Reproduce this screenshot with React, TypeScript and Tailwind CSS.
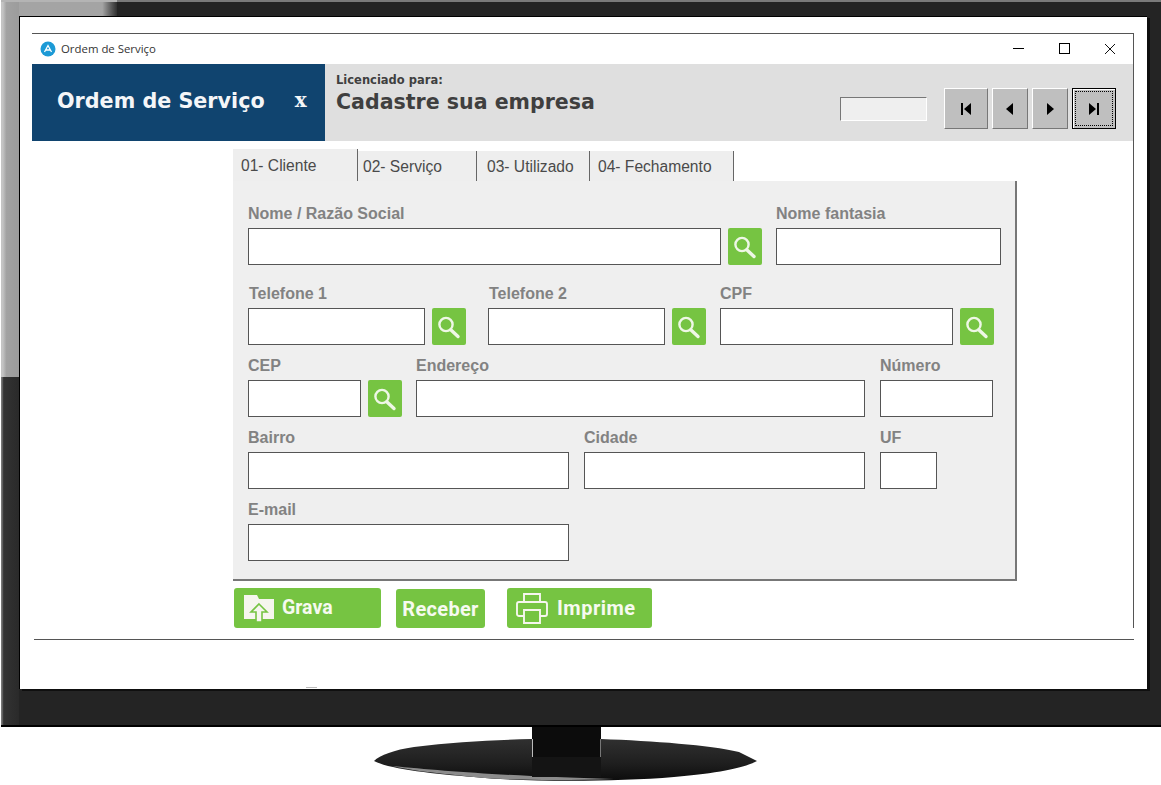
import React from "react";

const Label: React.FC<{ text: string }> = ({ text }) => (
    <div className="h-[22px] text-[16px] leading-[16px] font-bold text-[#828282] whitespace-nowrap">{text}</div>
);

const Input: React.FC<{ className: string }> = ({ className }) => (
    <div className={`h-[37px] bg-white border border-[#555] ${className}`} />
);

const SearchButton: React.FC = () => (
    <button className="ml-[7px] mt-[22px] w-[34px] h-[37px] shrink-0 bg-[#76c442] rounded-[2px] flex items-center justify-center">
        <svg width="24" height="24" viewBox="0 0 24 24" fill="none" stroke="#eef7e6">
            <circle cx="9" cy="9.5" r="6.6" strokeWidth="2.4" />
            <path d="M14 15 L21 21.5" strokeWidth="3.4" strokeLinecap="round" />
        </svg>
    </button>
);

const NavButton: React.FC<{ className: string; focused?: boolean; children: React.ReactNode }> = ({ className, focused, children }) => (
    <button
        className={`h-[41px] bg-[#bfbfbf] flex items-center justify-center ${className} ${
            focused
                ? "border border-black shadow-[inset_1px_1px_0_#ffffff] outline-1 outline-dotted outline-black -outline-offset-4"
                : "border-t border-l border-white border-b border-r border-b-[#777] border-r-[#777]"
        }`}
    >
        {children}
    </button>
);

const Tab: React.FC<{ label: string; className: string }> = ({ label, className }) => (
    <div className={`bg-[#eeeeee] border-r border-[#666] text-[15.6px] leading-[24px] text-[#4a4a4a] whitespace-nowrap ${className}`}>
        {label}
    </div>
);

const GreenButton: React.FC<{ className: string; children: React.ReactNode }> = ({ className, children }) => (
    <button className={`bg-[#76c442] rounded-[3px] flex items-center text-[#f6faf0] font-bold font-['Roboto',sans-serif] ${className}`}>
        {children}
    </button>
);

export default function App() {
    return (
        <div className="w-[1161px] h-[785px] bg-white overflow-hidden font-['Liberation_Sans',Arial,sans-serif]">
            {/* Monitor */}
            <div className="relative ml-px w-[1160px] h-[727px] pt-[16px] pl-[18px] bg-[#242424] border-b-2 border-black">
                <div className="absolute left-0 top-0 w-[18px] h-[377px] bg-gradient-to-r from-[#c4c4c4] from-10% via-[#a2a2a2] via-30% to-[#9c9c9c]" />
                <div className="absolute left-0 top-[377px] w-[18px] h-[348px] bg-gradient-to-r from-[#777777] from-5% via-[#333333] via-15% to-[#2a2a2a]" />
                <div className="absolute left-[18px] top-0 w-[98px] h-[16px] bg-gradient-to-r from-[#a4a4a4] from-85% to-[#303030]" />
                <div className="absolute left-0 top-0 w-[116px] h-[2px] bg-[#b4b4b4]" />
                <div className="absolute left-[116px] top-0 right-0 h-[2px] bg-[#7a7a7a]" />
                <div className="relative w-[1128px] h-[673px] pt-[16px] pl-[12px] bg-white border-t border-l border-black shadow-[3px_2px_0_#0f0f0f]">
                    {/* Window */}
                    <div className="w-[1102px] h-[595px] border-t border-r border-[#555] flex flex-col">
                        {/* Title bar */}
                        <div className="h-[30px] shrink-0 flex items-center pl-[8px] pr-[17px] pb-[1px]">
                            <svg width="16" height="16" viewBox="0 0 16 16">
                                <circle cx="8" cy="8" r="7.5" fill="#1c9ad6" />
                                <path d="M4.5 11 L8 4.5 L11.5 11 M5.5 9 H10.5" fill="none" stroke="#ffffff" strokeWidth="1.3" />
                            </svg>
                            <span className="ml-[5px] text-[11.4px] text-[#333] font-['Open_Sans',sans-serif]">Ordem de Serviço</span>
                            <div className="ml-auto flex items-center">
                                <span className="block w-[11px] h-px bg-black" />
                                <span className="block ml-[35px] w-[11px] h-[11px] border border-black" />
                                <svg className="ml-[34px]" width="12" height="12" viewBox="0 0 12 12" stroke="#111" fill="none">
                                    <path d="M1 1 L11 11 M11 1 L1 11" />
                                </svg>
                            </div>
                        </div>

                        {/* Header */}
                        <div className="h-[77px] shrink-0 flex bg-[#dfdfdf] font-['DejaVu_Sans',sans-serif]">
                            <div className="w-[293px] bg-[#10446f] text-[#f4f6f8] font-bold flex items-center pl-[25px] pb-[1px]">
                                <span className="text-[20.7px] whitespace-nowrap">Ordem de Serviço</span>
                                <span className="ml-[30px] pb-[4px] text-[20px] font-['DejaVu_Serif',serif]">x</span>
                            </div>
                            <div className="pl-[11px] pt-[8px] text-[#3f3f3f] font-bold">
                                <div className="text-[11.5px] leading-[16px]">Licenciado para:</div>
                                <div className="text-[20.55px] leading-[28px] whitespace-nowrap">Cadastre sua empresa</div>
                            </div>
                            <div className="ml-auto flex items-start pr-[17px] pt-[24px]">
                                <div className="w-[87px] h-[24px] mt-[9px] mr-[17px] bg-[#efefef] border-t border-l border-[#777] border-b border-r border-b-white border-r-white" />
                                <NavButton className="w-[44px] mr-[4px]">
                                    <svg width="12" height="12" viewBox="0 0 12 12" fill="#000"><path d="M1 0h2v12H1z M11 0v12L4 6z" /></svg>
                                </NavButton>
                                <NavButton className="w-[36px] mr-[4px]">
                                    <svg width="8" height="12" viewBox="0 0 8 12" fill="#000"><path d="M7 0v12L0 6z" /></svg>
                                </NavButton>
                                <NavButton className="w-[36px] mr-[4px]">
                                    <svg width="8" height="12" viewBox="0 0 8 12" fill="#000"><path d="M1 0v12l7-6z" /></svg>
                                </NavButton>
                                <NavButton className="w-[44px]" focused>
                                    <svg width="12" height="12" viewBox="0 0 12 12" fill="#000"><path d="M9 0h2v12H9z M1 0v12l7-6z" /></svg>
                                </NavButton>
                            </div>
                        </div>

                        {/* Tabs + form */}
                        <div className="ml-[201px] mt-[8px] w-[784px]">
                            <div className="h-[32px] flex items-end">
                                <Tab label="01- Cliente" className="w-[125px] h-[32px] pl-[8px] pt-[5px]" />
                                <Tab label="02- Serviço" className="w-[119px] h-[30px] pl-[5px] pt-[4px]" />
                                <Tab label="03- Utilizado" className="w-[113px] h-[30px] pl-[10px] pt-[4px]" />
                                <Tab label="04- Fechamento" className="w-[144px] h-[30px] pl-[8px] pt-[4px]" />
                            </div>
                            <div className="h-[400px] bg-[#efefef] border-r-2 border-b-2 border-[#777] pl-[15px] pt-[25px]">
                                <div className="flex">
                                    <div><Label text="Nome / Razão Social" /><Input className="w-[473px]" /></div>
                                    <SearchButton />
                                    <div className="ml-[14px]"><Label text="Nome fantasia" /><Input className="w-[225px]" /></div>
                                </div>
                                <div className="flex mt-[21px]">
                                    <div><div className="pl-px"><Label text="Telefone 1" /></div><Input className="w-[177px]" /></div>
                                    <SearchButton />
                                    <div className="ml-[22px]"><div className="pl-px"><Label text="Telefone 2" /></div><Input className="w-[177px]" /></div>
                                    <SearchButton />
                                    <div className="ml-[14px]"><Label text="CPF" /><Input className="w-[233px]" /></div>
                                    <SearchButton />
                                </div>
                                <div className="flex mt-[13px]">
                                    <div><Label text="CEP" /><Input className="w-[113px]" /></div>
                                    <SearchButton />
                                    <div className="ml-[14px]"><Label text="Endereço" /><Input className="w-[449px]" /></div>
                                    <div className="ml-[15px]"><Label text="Número" /><Input className="w-[113px]" /></div>
                                </div>
                                <div className="flex mt-[13px]">
                                    <div><Label text="Bairro" /><Input className="w-[321px]" /></div>
                                    <div className="ml-[15px]"><Label text="Cidade" /><Input className="w-[281px]" /></div>
                                    <div className="ml-[15px]"><Label text="UF" /><Input className="w-[57px]" /></div>
                                </div>
                                <div className="mt-[13px]">
                                    <Label text="E-mail" />
                                    <Input className="w-[321px]" />
                                </div>
                            </div>
                            {/* Action buttons */}
                            <div className="mt-[7px] ml-px flex items-start">
                                <GreenButton className="w-[147px] h-[40px] pl-[10px]">
                                    <svg width="30" height="28" viewBox="0 0 30 28">
                                        <path d="M0 1h13l2 4h15v20H0z" fill="#f6f6ee" />
                                        <path d="M15 10l8 8h-5v10h-6V18H7z" fill="#f6f6ee" stroke="#76c442" strokeWidth="1.6" />
                                    </svg>
                                    <span className="ml-[8px] text-[19.5px]">Grava</span>
                                </GreenButton>
                                <GreenButton className="ml-[15px] mt-px w-[89px] h-[39px] justify-center text-[20px] tracking-[0.3px]">Receber</GreenButton>
                                <GreenButton className="ml-[22px] w-[145px] h-[40px] pl-[9px]">
                                    <svg width="32" height="32" viewBox="0 0 32 32" fill="none" stroke="#f6f6ee" strokeWidth="1.9">
                                        <path d="M8 10V2h16v8" />
                                        <path d="M8 24H3a2 2 0 0 1-2-2V12a2 2 0 0 1 2-2h26a2 2 0 0 1 2 2v10a2 2 0 0 1-2 2h-5" />
                                        <path d="M8 18h16v13H8z" />
                                    </svg>
                                    <span className="ml-[9px] text-[20px] tracking-[0.5px]">Imprime</span>
                                </GreenButton>
                            </div>
                        </div>
                    </div>
                    {/* Status line */}
                    <div className="mt-[11px] ml-[2px] w-[1100px] h-px bg-[#555]" />
                    <div className="absolute left-[286px] bottom-[1px] w-[11px] h-px bg-[#bbb]" />
                </div>
            </div>

            {/* Stand */}
            <svg className="ml-[374px]" width="385" height="58" viewBox="0 0 385 58">
                <defs>
                    <linearGradient id="base" x1="0" x2="0" y1="0" y2="1">
                        <stop offset="0" stopColor="#303030" />
                        <stop offset="0.6" stopColor="#1e1e1e" />
                        <stop offset="1" stopColor="#0c0c0c" />
                    </linearGradient>
                </defs>
                <path d="M0 34 C6 28 20 23 40 20 C80 15 120 13 158 12 H227 C280 14 335 18 365 25 L383 34 C370 41 345 46 300 50 C240 55 150 55 100 50 C60 47 15 42 0 34Z" fill="url(#base)" />
                <path d="M18 39 C70 44 130 49 240 52 C180 54 120 53 90 49 C60 46 35 43 18 39Z" fill="#8c8c8c" />
                <path d="M158 0 H227 V30 H158Z" fill="#0c0c0c" />
                <path d="M158.5 12 V30" stroke="#bbbbbb" strokeWidth="1" />
                <path d="M226.5 12 V30" stroke="#777777" strokeWidth="1" />
                <path d="M158 30 H227 V50 H158Z" fill="#141414" />
            </svg>
        </div>
    );
}
